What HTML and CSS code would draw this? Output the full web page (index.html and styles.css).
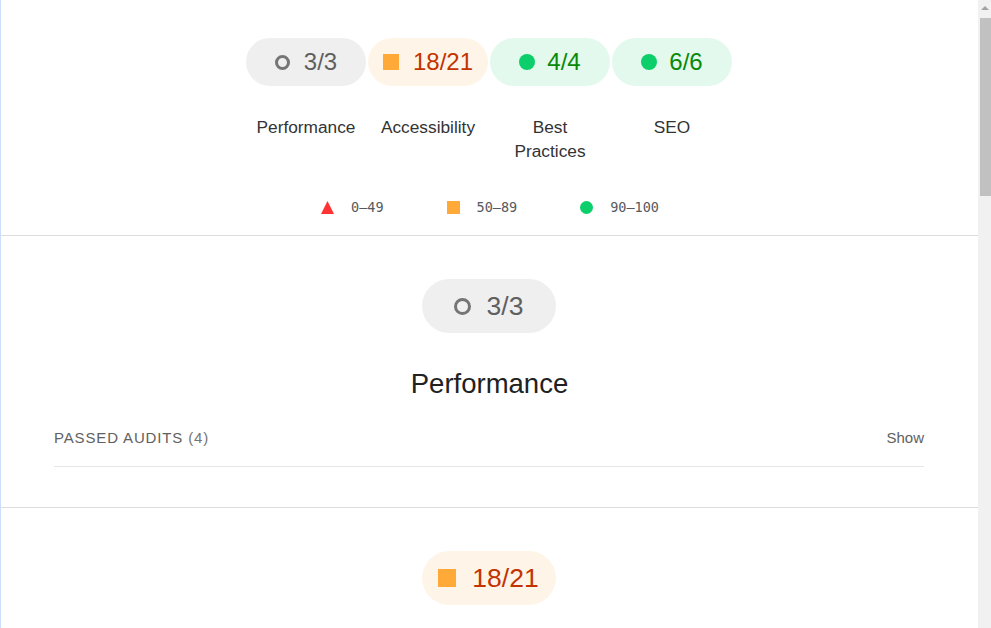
FILE: index.html
```html
<!DOCTYPE html>
<html lang="en">
<head>
<meta charset="utf-8">
<title>Lighthouse Report</title>
<link rel="stylesheet" href="styles.css">
</head>
<body>
<div class="viewport">
  <main class="page">
    <section class="summary">
      <div class="gauges">
        <div class="gauge">
          <div class="pill pill-neutral">
            <svg class="ico" width="15" height="15" viewBox="0 0 15 15"><circle cx="7.5" cy="7.5" r="6" fill="none" stroke="#757575" stroke-width="3"/></svg>
            <span>3/3</span>
          </div>
          <div class="label">Performance</div>
        </div>
        <div class="gauge">
          <div class="pill pill-average">
            <svg class="ico" width="16" height="16" viewBox="0 0 16 16"><rect width="16" height="16" fill="#ffa938"/></svg>
            <span>18/21</span>
          </div>
          <div class="label">Accessibility</div>
        </div>
        <div class="gauge">
          <div class="pill pill-pass">
            <svg class="ico ico-g" width="16" height="16" viewBox="0 0 16 16"><circle cx="8" cy="8" r="8" fill="#0ccf6b"/></svg>
            <span>4/4</span>
          </div>
          <div class="label">Best Practices</div>
        </div>
        <div class="gauge">
          <div class="pill pill-pass">
            <svg class="ico ico-g" width="16" height="16" viewBox="0 0 16 16"><circle cx="8" cy="8" r="8" fill="#0ccf6b"/></svg>
            <span>6/6</span>
          </div>
          <div class="label">SEO</div>
        </div>
      </div>
      <div class="legend">
        <div class="legend-item">
          <svg width="13" height="13" viewBox="0 0 13 13"><polygon points="6.5,0 13,13 0,13" fill="#ff3333"/></svg>
          <span>0–49</span>
        </div>
        <div class="legend-item">
          <svg width="13" height="13" viewBox="0 0 13 13"><rect width="13" height="13" fill="#ffa938"/></svg>
          <span>50–89</span>
        </div>
        <div class="legend-item">
          <svg width="13" height="13" viewBox="0 0 13 13"><circle cx="6.5" cy="6.5" r="6.5" fill="#0ccf6b"/></svg>
          <span>90–100</span>
        </div>
      </div>
    </section>

    <section class="category">
      <div class="pill pill-big pill-neutral">
        <svg class="ico-big" width="17" height="17" viewBox="0 0 17 17"><circle cx="8.5" cy="8.5" r="7" fill="none" stroke="#757575" stroke-width="3"/></svg>
        <span>3/3</span>
      </div>
      <h2 class="cat-title">Performance</h2>
      <div class="audit-group">
        <span class="group-title">Passed audits <span class="count">(4)</span></span>
        <span class="show">Show</span>
      </div>
    </section>

    <section class="category">
      <div class="pill pill-big pill-average">
        <svg class="ico-big" width="18" height="18" viewBox="0 0 18 18"><rect width="18" height="18" fill="#ffa938"/></svg>
        <span>18/21</span>
      </div>
    </section>
  </main>
  <div class="scrollbar">
    <div class="arrow"></div>
    <div class="thumb"></div>
  </div>
</div>
</body>
</html>
```

FILE: styles.css
```css
html, body {
  margin: 0;
  padding: 0;
  background: #ffffff;
}

body {
  font-family: "Liberation Sans", Arial, sans-serif;
  color: #212121;
}

.viewport {
  display: flex;
  height: 628px;
  overflow: hidden;
}

.page {
  flex: 1;
  border-left: 1px solid #cddcfb;
  overflow: hidden;
}

.summary {
  padding-top: 38px;
  padding-bottom: 20px;
  border-bottom: 1px solid #dcdcdc;
}

.gauges {
  display: flex;
  justify-content: center;
  margin-left: -1px;
}

.gauge {
  width: 122px;
  display: flex;
  flex-direction: column;
  align-items: center;
}

.pill {
  display: flex;
  align-items: center;
  justify-content: center;
  width: 120px;
  height: 48px;
  border-radius: 24px;
  font-size: 24px;
  gap: 14px;
}

.pill-neutral {
  background: #efefef;
  color: #5f5f5f;
}

.pill-average {
  background: #fef5e8;
  color: #c33300;
}

.pill-pass {
  background: #e3f9ed;
  color: #088908;
  gap: 12px;
}

.ico {
  flex: none;
}

.label {
  margin-top: 29px;
  width: 104px;
  text-align: center;
  font-size: 17.3px;
  line-height: 24px;
  color: #333333;
}

.legend {
  display: flex;
  justify-content: center;
  gap: 63px;
  margin-top: 36px;
  padding-left: 1px;
  font-family: "DejaVu Sans Mono", "Liberation Mono", monospace;
  font-size: 13.5px;
  line-height: 16px;
  color: #555a60;
}

.legend-item {
  display: flex;
  align-items: center;
  gap: 17px;
}

.legend-item svg {
  flex: none;
}

.category {
  display: flex;
  flex-direction: column;
  align-items: center;
  padding-top: 43px;
  padding-bottom: 40px;
  border-bottom: 1px solid #dcdcdc;
}

.pill-big {
  width: 134px;
  height: 54px;
  border-radius: 27px;
  font-size: 26.5px;
  gap: 16px;
  margin-left: -2px;
}

.cat-title {
  margin: 35px 0 0;
  font-size: 27.5px;
  font-weight: normal;
  line-height: 32px;
  color: #212121;
}

.audit-group {
  align-self: stretch;
  margin: 20px 54px 0 53px;
  padding: 9px 0 19px;
  border-bottom: 1px solid #e6e6e6;
  display: flex;
  justify-content: space-between;
  align-items: center;
  font-size: 15px;
  line-height: 18px;
  color: #616161;
}

.group-title {
  text-transform: uppercase;
  letter-spacing: 0.85px;
}

.count {
  color: #757575;
}

.show {
  font-size: 15px;
  color: #616161;
}

.scrollbar {
  width: 13px;
  flex: none;
  background: #f1f1f1;
  display: flex;
  flex-direction: column;
  align-items: flex-end;
}

.arrow {
  width: 0;
  height: 0;
  margin: 6px 2px 0 0;
  border-left: 4px solid transparent;
  border-right: 4px solid transparent;
  border-bottom: 4px solid #a3a3a3;
}

.thumb {
  width: 11px;
  height: 178px;
  margin-top: 8px;
  background: #c1c1c1;
}
```
